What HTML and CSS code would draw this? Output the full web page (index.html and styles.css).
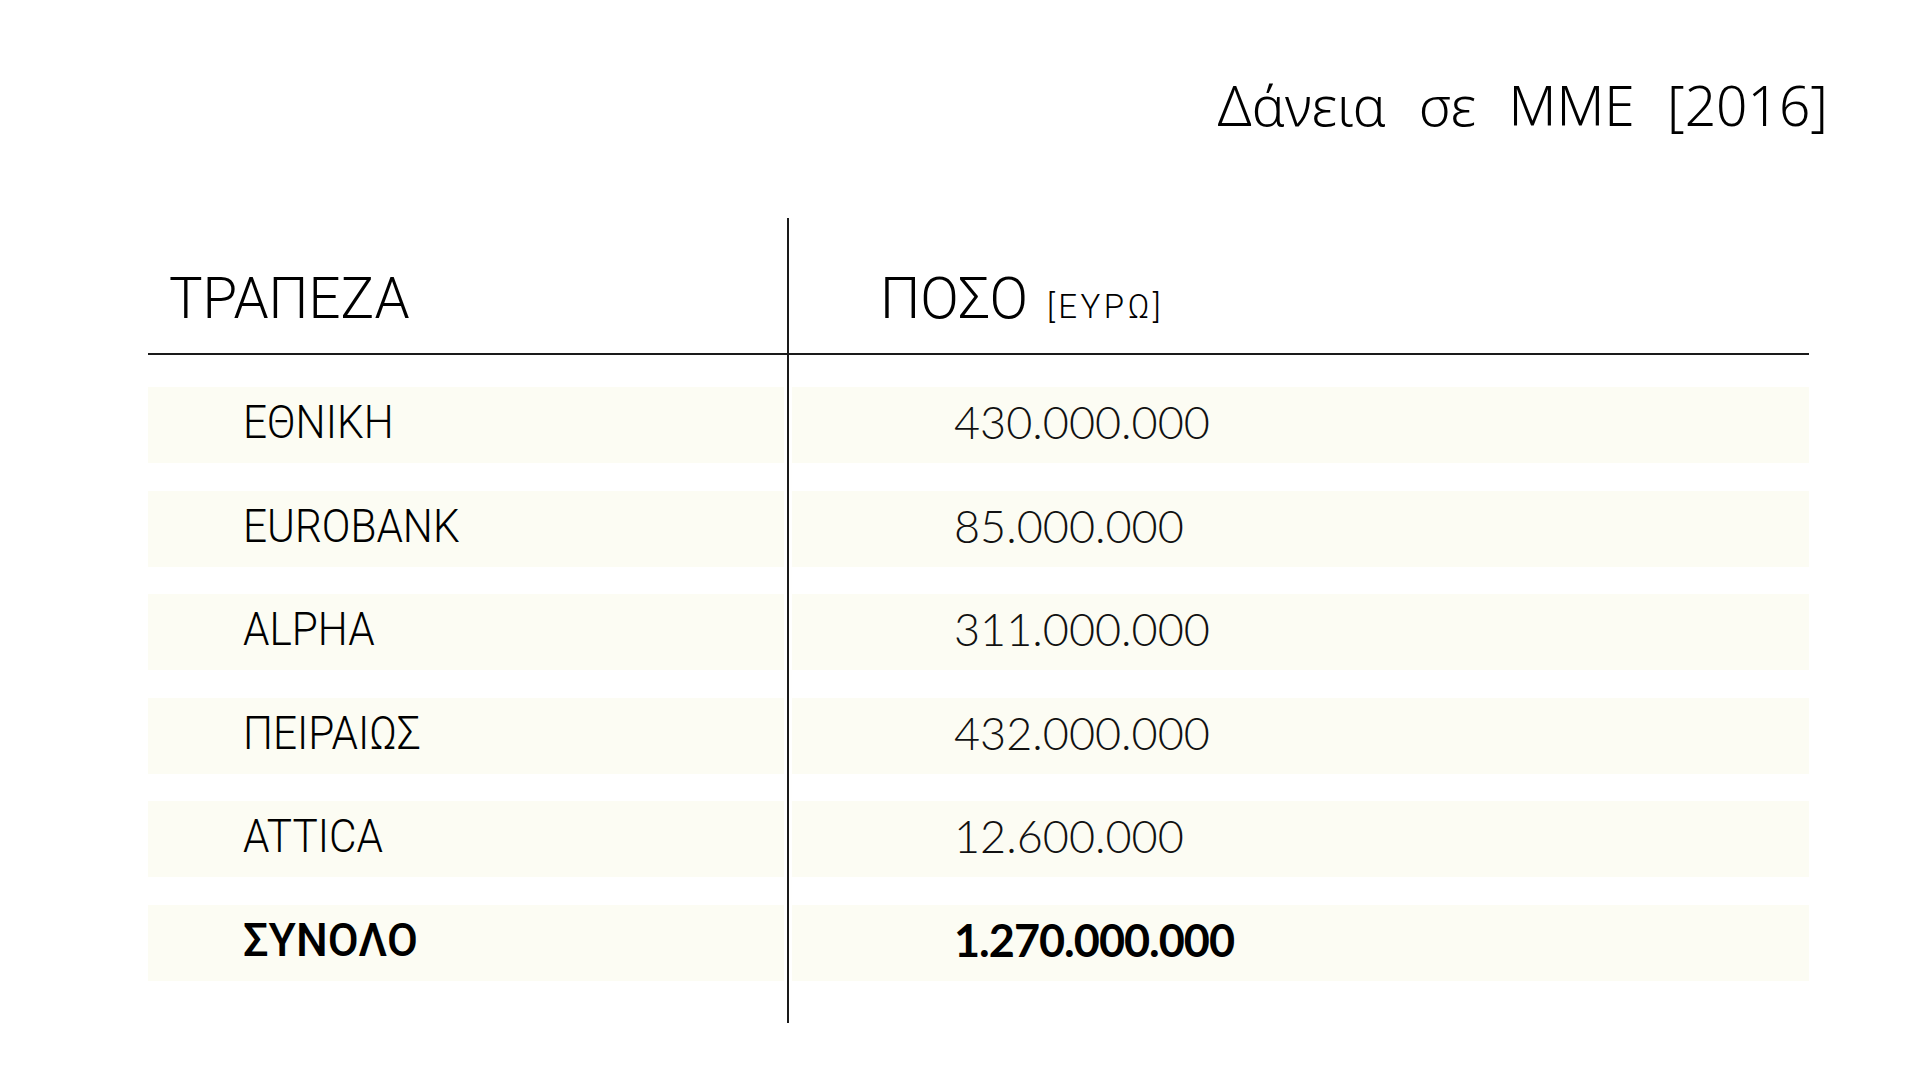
FILE: index.html
```html
<!DOCTYPE html>
<html lang="el">
<head>
<meta charset="utf-8">
<title>Δάνεια σε ΜΜΕ [2016]</title>
<link rel="stylesheet" href="styles.css">
</head>
<body>
<div class="page">
  <h1 class="title">Δάνεια σε ΜΜΕ [2016]</h1>
  <div class="table">
    <div class="divider"></div>
    <div class="head head-left"><span class="squeeze">ΤΡΑΠΕΖΑ</span></div>
    <div class="head head-right"><span class="squeeze">ΠΟΣΟ</span><span class="unit">[ΕΥΡΩ]</span></div>
    <div class="rule"></div>

    <div class="cell label first"><span class="squeeze">ΕΘΝΙΚΗ</span></div>
    <div class="cell amount first">430.000.000</div>

    <div class="cell label"><span class="squeeze">EUROBANK</span></div>
    <div class="cell amount">85.000.000</div>

    <div class="cell label"><span class="squeeze">ALPHA</span></div>
    <div class="cell amount">311.000.000</div>

    <div class="cell label"><span class="squeeze">ΠΕΙΡΑΙΩΣ</span></div>
    <div class="cell amount">432.000.000</div>

    <div class="cell label"><span class="squeeze">ATTICA</span></div>
    <div class="cell amount">12.600.000</div>

    <div class="cell label total"><span class="squeeze">ΣΥΝΟΛΟ</span></div>
    <div class="cell amount total">1.270.000.000</div>

    <div class="spacer"></div>
  </div>
</div>
</body>
</html>
```

FILE: styles.css
```css
html, body {
  margin: 0;
  padding: 0;
  background: #ffffff;
}

.page {
  width: 1932px;
  height: 1086px;
  box-sizing: border-box;
  padding-top: 67px;
  color: #111;
}

.title {
  margin: 0 104px 0 0;
  text-align: right;
  font-family: "Noto Sans", "DejaVu Sans", sans-serif;
  font-weight: 300;
  font-size: 55px;
  line-height: 76px;
  word-spacing: 18px;
  letter-spacing: 0;
  color: #000;
}

.table {
  margin-top: 75px;
  margin-left: 148px;
  width: 1661px;
  display: grid;
  grid-template-columns: 636px 8px 1017px;
}

.divider {
  grid-column: 2;
  grid-row: 1 / 10;
  justify-self: center;
  width: 2px;
  background: #1a1a1a;
}

.squeeze {
  display: inline-block;
  transform: scaleX(0.92);
  transform-origin: left center;
  white-space: nowrap;
}

.head {
  grid-row: 1;
  height: 135px;
  box-sizing: border-box;
  padding-top: 50px;
  font-family: "Roboto", "Liberation Sans", sans-serif;
  font-weight: 300;
  font-size: 58px;
  line-height: 60px;
  color: #000;
  white-space: nowrap;
}

.head-left {
  grid-column: 1;
  padding-left: 21px;
}

.head-left .squeeze {
  transform: scaleX(0.97);
}

.head-right {
  grid-column: 3;
  padding-left: 88px;
}

.head-right .squeeze {
  transform: scaleX(0.98);
}

.unit {
  font-size: 33px;
  margin-left: 16px;
  letter-spacing: 3.5px;
}

.rule {
  grid-column: 1 / -1;
  grid-row: 2;
  height: 2px;
  background: #1a1a1a;
}

.cell {
  height: 76px;
  margin-top: 27.5px;
  background: #fcfcf3;
  display: flex;
  align-items: center;
  box-sizing: border-box;
  padding-bottom: 6px;
  color: #111;
}

.cell.first {
  margin-top: 32px;
}

.label {
  grid-column: 1;
  padding-left: 95px;
  font-family: "Roboto", "Liberation Sans", sans-serif;
  font-weight: 300;
  font-size: 46px;
  color: #000;
}

.amount {
  grid-column: 3;
  padding-left: 162px;
  font-family: "Lato", "Noto Sans", sans-serif;
  font-weight: 300;
  font-size: 45px;
}

.label.total {
  font-weight: 500;
}

.label.total .squeeze {
  transform: scaleX(0.975);
}

.amount.total {
  font-weight: 700;
  letter-spacing: -1px;
  color: #000;
}

.spacer {
  grid-column: 1;
  height: 42px;
}
```
